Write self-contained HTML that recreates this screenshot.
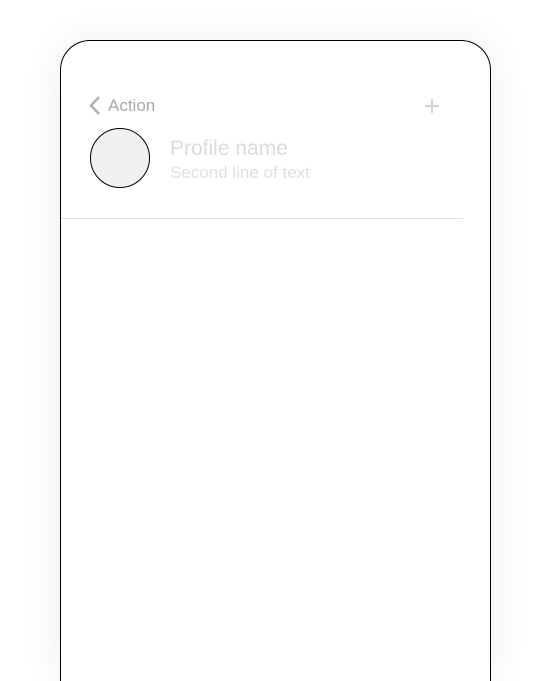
<!DOCTYPE html>
<html><head><style>
html,body{margin:0;padding:0;background:#fff;width:551px;height:681px;overflow:hidden;font-family:"Liberation Sans",sans-serif;position:relative}
.frame{position:absolute;left:60px;top:40px;width:429px;height:641px;border:1px solid #000;border-bottom:none;border-radius:30px 30px 0 0;background:#fff;box-shadow:0 0 40px rgba(0,0,0,0.07)}
.t{position:absolute;white-space:nowrap}
</style></head><body>
<div class="frame"></div>
<svg style="position:absolute;left:88px;top:95px" width="16" height="22"><path d="M11 2 L3 10.5 L11 19" fill="none" stroke="#b0b0b0" stroke-width="2.4"/></svg>
<div class="t" style="left:108px;top:96px;font-size:17px;color:#a8a8a8">Action</div>
<svg style="position:absolute;left:425px;top:99px" width="14" height="14"><path d="M7 0V14M0 7H14" stroke="#c4c4c4" stroke-width="1.4"/></svg>
<div style="position:absolute;left:90px;top:128px;width:58px;height:58px;border:1px solid #000;border-radius:50%;background:#f0f0f0"></div>
<div class="t" style="left:170px;top:137px;font-size:21px;color:#dcdcdc">Profile name</div>
<div class="t" style="left:170px;top:163px;font-size:17px;color:#e0e0e0">Second line of text</div>
<div style="position:absolute;left:61px;top:218px;width:402px;height:1px;background:#e2e2e2"></div>
</body></html>
